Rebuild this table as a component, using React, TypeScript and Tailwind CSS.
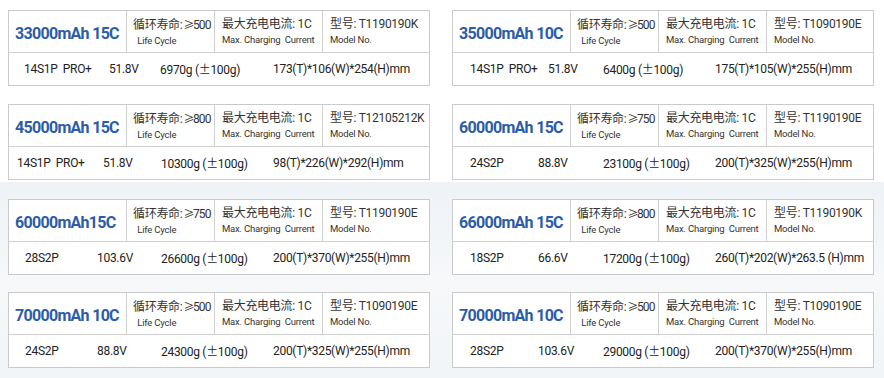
const font = { fontFamily: 'Roboto, "Noto Sans CJK SC", sans-serif' }
const cjk = { fontFamily: '"Noto Sans CJK SC", sans-serif' }

type Pack = {
  title: string
  cycle: string
  model: string
  cells: string[]
  pad: string
  widths: string[]
}

const packs: Pack[] = [
  {
    title: '33000mAh 15C',
    cycle: '500',
    model: 'T1190190K',
    cells: ['14S1P  PRO+', '51.8V', '6970g', '173(T)*106(W)*254(H)mm'],
    pad: 'pl-[15px]',
    widths: ['w-[85px]', 'w-[51px]', 'w-[113px]'],
  },
  {
    title: '35000mAh 10C',
    cycle: '500',
    model: 'T1090190E',
    cells: ['14S1P  PRO+', '51.8V', '6400g', '175(T)*105(W)*255(H)mm'],
    pad: 'pl-[17px]',
    widths: ['w-[78px]', 'w-[55px]', 'w-[112px]'],
  },
  {
    title: '45000mAh 15C',
    cycle: '800',
    model: 'T12105212K',
    cells: ['14S1P  PRO+', '51.8V', '10300g', '98(T)*226(W)*292(H)mm'],
    pad: 'pl-[8px]',
    widths: ['w-[86px]', 'w-[58px]', 'w-[112px]'],
  },
  {
    title: '60000mAh 15C',
    cycle: '750',
    model: 'T1190190E',
    cells: ['24S2P', '88.8V', '23100g', '200(T)*325(W)*255(H)mm'],
    pad: 'pl-[17px]',
    widths: ['w-[68px]', 'w-[65px]', 'w-[112px]'],
  },
  {
    title: '60000mAh15C',
    cycle: '750',
    model: 'T1190190E',
    cells: ['28S2P', '103.6V', '26600g', '200(T)*370(W)*255(H)mm'],
    pad: 'pl-[16px]',
    widths: ['w-[72px]', 'w-[64px]', 'w-[112px]'],
  },
  {
    title: '66000mAh 15C',
    cycle: '800',
    model: 'T1190190K',
    cells: ['18S2P', '66.6V', '17200g', '260(T)*202(W)*263.5 (H)mm'],
    pad: 'pl-[17px]',
    widths: ['w-[68px]', 'w-[65px]', 'w-[112px]'],
  },
  {
    title: '70000mAh 10C',
    cycle: '500',
    model: 'T1090190E',
    cells: ['24S2P', '88.8V', '24300g', '200(T)*325(W)*255(H)mm'],
    pad: 'pl-[16px]',
    widths: ['w-[72px]', 'w-[64px]', 'w-[112px]'],
  },
  {
    title: '70000mAh 10C',
    cycle: '500',
    model: 'T1090190E',
    cells: ['28S2P', '103.6V', '29000g', '200(T)*370(W)*255(H)mm'],
    pad: 'pl-[17px]',
    widths: ['w-[68px]', 'w-[65px]', 'w-[112px]'],
  },
]

function Label({ zh, en, className }: { zh: React.ReactNode; en: string; className: string }) {
  return (
    <div className={`flex flex-col justify-center border-l border-[#d0d0d0] pt-[1px] ${className}`}>
      <div className="text-[12px] leading-[15px] tracking-[-0.3px] text-[#333] whitespace-pre">{zh}</div>
      <div className="text-[9.5px] leading-[15px] tracking-[-0.2px] text-[#333] whitespace-pre">{en}</div>
    </div>
  )
}

function PackCard({ pack }: { pack: Pack }) {
  return (
    <div className="w-[422px] border border-[#cacaca] bg-white">
      <div className="flex h-[42px] border-b border-[#d0d0d0]">
        <div className="flex w-[117px] items-center pl-[6px] pt-[4px]">
          <span className="whitespace-pre text-[16px] font-bold tracking-[-0.7px] text-[#2b5ca8]">{pack.title}</span>
        </div>
        <Label
          className="w-[88px] pl-[6px]"
          zh={
            <>
              循环寿命:<span style={cjk} className="text-[11px] tracking-[-1.5px]"> ≥</span>
              <span className="tracking-[-0.8px]">{pack.cycle}</span>
            </>
          }
          en={'  Life Cycle'}
        />
        <Label className="w-[108px] pl-[7px]" zh="最大充电电流: 1C" en="Max. Charging  Current" />
        <Label className="flex-1 pl-[7px]" zh={`型号: ${pack.model}`} en="Model No." />
      </div>
      <div className={`flex h-[32px] items-center text-[12px] tracking-[-0.3px] text-[#222] ${pack.pad}`}>
        {pack.cells.map((c, i) => (
          <div key={i} className={`whitespace-pre ${pack.widths[i] ?? ''}`}>
            {i === 2 ? (
              <>
                {c} (<span style={cjk}>±</span>100g)
              </>
            ) : (
              c
            )}
          </div>
        ))}
      </div>
    </div>
  )
}

export default function App() {
  return (
    <div className="w-[884px] h-[378px] overflow-hidden bg-white" style={font}>
      <div className="flex flex-col gap-[18px] pt-[10px] pl-[8px] pr-[10px] h-[182px]">
        {[0, 2].map((r) => (
          <div key={r} className="flex gap-[22px]">
            <PackCard pack={packs[r]} />
            <PackCard pack={packs[r + 1]} />
          </div>
        ))}
      </div>
      <div className="flex flex-col gap-[17px] pt-[17px] pl-[8px] h-[196px] bg-gradient-to-b from-[#eef2f6] via-[#f6f8fa] to-[#f2f5f8]">
        {[4, 6].map((r) => (
          <div key={r} className="flex gap-[22px]">
            <PackCard pack={packs[r]} />
            <PackCard pack={packs[r + 1]} />
          </div>
        ))}
      </div>
    </div>
  )
}
